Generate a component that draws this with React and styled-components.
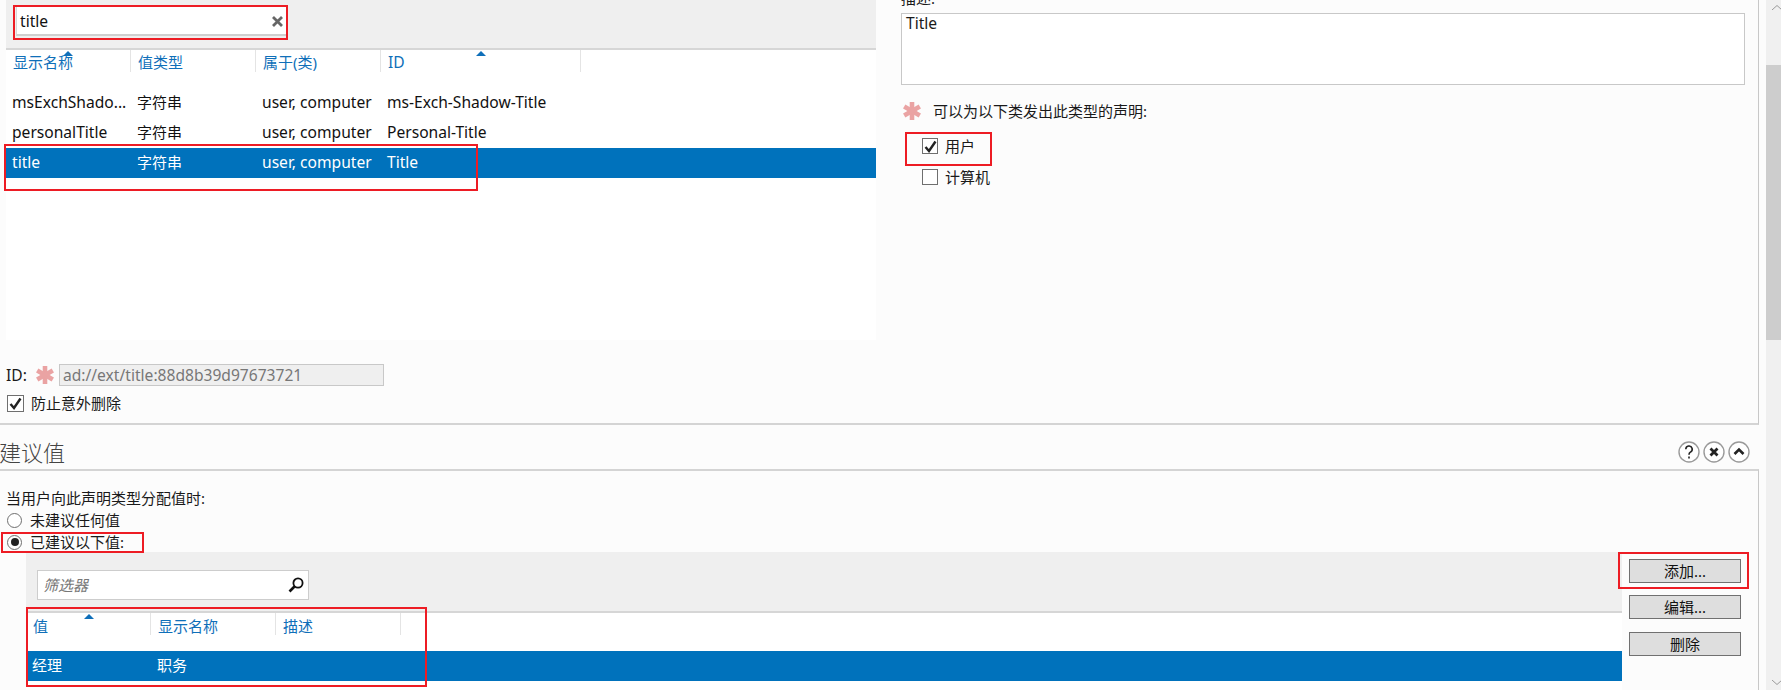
import React from "react";
import styled, { createGlobalStyle } from "styled-components";

const CJK = `"Noto Sans", "Noto Sans CJK SC", sans-serif`;
const LATIN_SIZE = "15.6px";

const Global = createGlobalStyle`
  html, body { margin: 0; padding: 0; background: #fcfcfc; }
  body { font: 15px/20px ${CJK}; color: #1a1a1a; overflow: hidden; }
  * { box-sizing: border-box; }
`;

const Page = styled.div`
  position: relative;
  width: 1781px;
  height: 690px;
  display: flex;
  overflow: hidden;
`;
const Main = styled.div`
  width: 1766px;
  display: flex;
  flex-direction: column;
`;
const TopPanel = styled.section`
  flex: none;
  height: 425px;
  width: 1759px;
  border-right: 1px solid #c8c8c8;
  border-bottom: 2px solid #d4d4d4;
  display: flex;
`;
const LeftColumn = styled.div`
  width: 901px;
  padding-left: 6px;
`;
const ListPanel = styled.div`
  width: 870px;
  height: 340px;
  background: #fff;
`;
const FilterBar = styled.div`
  height: 48px;
  padding: 7px 0 0 10px;
  background: #efefef;
`;
const TopSearch = styled.div`
  width: 271px;
  height: 29px;
  background: #fff;
  border-bottom: 2px solid #cfcfcf;
  border-left: 1px solid #d8d8d8;
  font-size: ${LATIN_SIZE};
  line-height: 28px;
  padding-left: 3px;
  color: #111;
  display: flex;
  justify-content: space-between;
`;
const ClearGlyph = styled.svg`
  width: 13px;
  height: 13px;
  margin: 8px 3px 0 0;
`;
const HeaderRow = styled.div`
  display: flex;
  height: ${(p) => p.$h}px;
  border-top: 2px solid #d6d6d6;
  background: #fff;
`;
const HeaderCell = styled.div`
  position: relative;
  width: 125px;
  height: 22px;
  border-right: 1px solid #e4e4e4;
  color: #0f6fb9;
  line-height: 20px;
  padding: ${(p) => p.$top}px 0 0 7px;
`;
const WideHeader = styled(HeaderCell)`
  width: 200px;
  font-size: ${LATIN_SIZE};
`;
const SortArrow = styled.span`
  position: absolute;
  left: ${(p) => p.$x}px;
  top: 1px;
  width: 0;
  height: 0;
  border: 5px solid transparent;
  border-top: 0;
  border-bottom: 5px solid #0f6fb9;
`;
const Row = styled.div`
  display: flex;
  height: 30px;
  line-height: 28px;
  color: ${(p) => (p.$selected ? "#fff" : "#111")};
  background: ${(p) => (p.$selected ? "#0072bc" : "transparent")};
`;
const Cell = styled.div`
  width: 125px;
  padding-left: 6px;
  white-space: nowrap;
  font-size: ${(p) => (p.$latin ? LATIN_SIZE : "15px")};
`;
const IdLine = styled.div`
  display: flex;
  align-items: center;
  height: 22px;
  margin-top: 24px;
  font-size: ${LATIN_SIZE};
`;
const IdLabel = styled.span`
  width: 30px;
`;
const ReadOnly = styled.div`
  width: 325px;
  height: 22px;
  margin-left: 5px;
  background: #efefef;
  border: 1px solid #c8c8c8;
  color: #777;
  line-height: 20px;
  padding-left: 3px;
`;
const Check = styled.div`
  display: flex;
  align-items: center;
  gap: 7px;
  height: 24px;
`;
const Box = styled.span`
  width: 17px;
  height: 17px;
  border: 1px solid #6f6f6f;
  background: #fff;
  display: flex;
  align-items: center;
  justify-content: center;
`;
const SmallBox = styled(Box)`
  width: 16px;
  height: 16px;
`;
const ProtectCheck = styled(Check)`
  margin: 5px 0 0 1px;
`;
const RightColumn = styled.div`
  flex: 1;
`;
const Clipped = styled.div`
  height: 13px;
  line-height: 10px;
  overflow: hidden;
  & > span { position: relative; top: -7px; }
`;
const TextArea = styled.div`
  width: 844px;
  height: 72px;
  background: #fff;
  border: 1px solid #c8c8c8;
  font-size: ${LATIN_SIZE};
  line-height: 19px;
  padding: 0 4px;
`;
const ClaimLine = styled.div`
  display: flex;
  align-items: center;
  gap: 12px;
  margin: 17px 0 0 2px;
  height: 18px;
`;
const ClaimChecks = styled.div`
  display: flex;
  flex-direction: column;
  gap: 7px;
  margin: 14px 0 0 21px;
`;
const HeadingBar = styled.div`
  flex: none;
  height: 44px;
  width: 1759px;
  display: flex;
  justify-content: space-between;
  align-items: center;
  padding-right: 9px;
`;
const Heading = styled.h2`
  margin: 10px 0 0 -1px;
  font-size: 22px;
  font-weight: 300;
  line-height: 32px;
  color: #444;
`;
const HeadIcons = styled.div`
  display: flex;
  gap: 3px;
  margin-top: 9px;
`;
const RoundIcon = styled.svg`
  width: 22px;
  height: 22px;
`;
const BottomPanel = styled.section`
  flex: 1;
  min-height: 0;
  overflow: hidden;
  width: 1759px;
  border-top: 2px solid #d4d4d4;
  border-right: 1px solid #c8c8c8;
  padding: 17px 0 0 6px;
`;
const Prompt = styled.div`
  height: 20px;
`;
const RadioLine = styled.div`
  display: flex;
  align-items: center;
  gap: 8px;
  height: 20px;
  margin: 2px 0 0 1px;
`;
const Radio = styled.span`
  width: 15px;
  height: 15px;
  border-radius: 50%;
  border: 1px solid #6f6f6f;
  background: #fff;
  display: flex;
  align-items: center;
  justify-content: center;
  &::after {
    content: "";
    display: ${(p) => (p.$on ? "block" : "none")};
    width: 8px;
    height: 8px;
    border-radius: 50%;
    background: #222;
  }
`;
const ValuesArea = styled.div`
  display: flex;
  margin-left: 20px;
`;
const ValuesList = styled.div`
  width: 1596px;
  background: #efefef;
`;
const FilterBox = styled.div`
  width: 272px;
  height: 30px;
  margin: 18px 0 11px 11px;
  background: #fff;
  border: 1px solid #cdcdcd;
  display: flex;
  align-items: center;
  justify-content: space-between;
  padding: 0 4px 0 5px;
  color: #777;
  font-style: italic;
`;
const HeadSpacer = styled.div`
  height: 14px;
  background: #fff;
`;
const BottomWhite = styled.div`
  height: 12px;
  background: #fff;
`;
const Buttons = styled.div`
  padding: 7px 0 0 7px;
  display: flex;
  flex-direction: column;
`;
const Btn = styled.button`
  width: 112px;
  height: 24px;
  margin-bottom: ${(p) => p.$mb}px;
  background: #dedede;
  border: 1px solid #707070;
  font: inherit;
  line-height: 20px;
  padding: 0;
  color: #111;
`;
const Scrollbar = styled.div`
  width: 15px;
  background: #f0f0f0;
  display: flex;
  flex-direction: column;
  padding-top: 5px;
`;
const Thumb = styled.div`
  width: 100%;
  height: 275px;
  margin-top: 55px;
  background: #cdcdcd;
`;
const Chevron = styled.svg`
  width: 10px;
  height: 5px;
  margin-left: 6px;
  flex: none;
`;
const BottomChevron = styled(Chevron)`
  margin-top: 340px;
`;
const Highlight = styled.div`
  position: absolute;
  left: ${(p) => p.$x}px;
  top: ${(p) => p.$y}px;
  width: ${(p) => p.$w}px;
  height: ${(p) => p.$h}px;
  border: 2px solid #ed1c24;
  pointer-events: none;
`;

const Asterisk = () => (
  <svg width="18" height="18" viewBox="0 0 18 18">
    <g stroke="#eaa3a3" strokeWidth="4.6">
      <path d="M9 0v18" />
      <path d="M1.2 4.5l15.6 9" />
      <path d="M16.8 4.5l-15.6 9" />
    </g>
  </svg>
);
const Tick = () => (
  <svg width="13" height="13" viewBox="0 0 13 13">
    <path d="M1.5 7l3.5 4L11.5 1.5" fill="none" stroke="#222" strokeWidth="2.4" />
  </svg>
);

const rows = [
  ["msExchShado...", "ms-Exch-Shadow-Title"],
  ["personalTitle", "Personal-Title"],
  ["title", "Title"],
];

const headIcons = [
  { d: "M7.8 8.2a3.2 3.2 0 1 1 4.6 2.9c-1 .6-1.4 1.2-1.4 2.6M11 15.4v2", w: 1.6 },
  { d: "M7.5 7.5l7 7M14.5 7.5l-7 7", w: 2.8 },
  { d: "M6.5 13L11 8.5l4.5 4.5", w: 2.6 },
];

export default function App() {
  return (
    <Page>
      <Global />
      <Main>
        <TopPanel>
          <LeftColumn>
            <ListPanel>
              <FilterBar>
                <TopSearch>
                  title
                  <ClearGlyph viewBox="0 0 13 13">
                    <path d="M2 2l9 9M11 2l-9 9" stroke="#666" strokeWidth="2.8" />
                  </ClearGlyph>
                </TopSearch>
              </FilterBar>
              <HeaderRow $h={40}>
                <HeaderCell $top={2}>显示名称<SortArrow $x={57} /></HeaderCell>
                <HeaderCell $top={2}>值类型</HeaderCell>
                <HeaderCell $top={2}>属于(类)</HeaderCell>
                <WideHeader $top={2}>ID<SortArrow $x={95} /></WideHeader>
              </HeaderRow>
              {rows.map(([name, id], i) => (
                <Row key={name} $selected={i === 2}>
                  <Cell $latin>{name}</Cell>
                  <Cell>字符串</Cell>
                  <Cell $latin>user, computer</Cell>
                  <Cell $latin>{id}</Cell>
                </Row>
              ))}
            </ListPanel>
            <IdLine>
              <IdLabel>ID:</IdLabel>
              <Asterisk />
              <ReadOnly>ad://ext/title:88d8b39d97673721</ReadOnly>
            </IdLine>
            <ProtectCheck>
              <Box><Tick /></Box>
              防止意外删除
            </ProtectCheck>
          </LeftColumn>
          <RightColumn>
            <Clipped><span>描述:</span></Clipped>
            <TextArea>Title</TextArea>
            <ClaimLine><Asterisk />可以为以下类发出此类型的声明:</ClaimLine>
            <ClaimChecks>
              <Check><SmallBox><Tick /></SmallBox>用户</Check>
              <Check><SmallBox />计算机</Check>
            </ClaimChecks>
          </RightColumn>
        </TopPanel>
        <HeadingBar>
          <Heading>建议值</Heading>
          <HeadIcons>
            {headIcons.map(({ d, w }) => (
              <RoundIcon key={d} viewBox="0 0 22 22">
                <circle cx="11" cy="11" r="10" fill="#fff" stroke="#9a9a9a" strokeWidth="1.4" />
                <path d={d} fill="none" stroke="#222" strokeWidth={w} />
              </RoundIcon>
            ))}
          </HeadIcons>
        </HeadingBar>
        <BottomPanel>
          <Prompt>当用户向此声明类型分配值时:</Prompt>
          <RadioLine><Radio />未建议任何值</RadioLine>
          <RadioLine><Radio $on />已建议以下值:</RadioLine>
          <ValuesArea>
            <ValuesList>
              <FilterBox>
                筛选器
                <svg width="18" height="18" viewBox="0 0 18 18">
                  <circle cx="12" cy="7" r="4.6" fill="none" stroke="#111" strokeWidth="1.8" />
                  <path d="M8.5 10.5L3.5 15.5" stroke="#111" strokeWidth="2.6" />
                </svg>
              </FilterBox>
              <HeaderRow $h={26}>
                <HeaderCell $top={3}>值<SortArrow $x={58} /></HeaderCell>
                <HeaderCell $top={3}>显示名称</HeaderCell>
                <HeaderCell $top={3}>描述</HeaderCell>
              </HeaderRow>
              <HeadSpacer />
              <Row $selected>
                <Cell>经理</Cell>
                <Cell>职务</Cell>
              </Row>
              <BottomWhite />
            </ValuesList>
            <Buttons>
              <Btn $mb={12}>添加...</Btn>
              <Btn $mb={13}>编辑...</Btn>
              <Btn $mb={0}>删除</Btn>
            </Buttons>
          </ValuesArea>
        </BottomPanel>
      </Main>
      <Scrollbar>
        <Chevron viewBox="0 0 10 5"><path d="M0 5l5-4.5L10 5" fill="none" stroke="#9a9a9a" /></Chevron>
        <Thumb />
        <BottomChevron viewBox="0 0 10 5"><path d="M0 0l5 4.5L10 0" fill="none" stroke="#9a9a9a" /></BottomChevron>
      </Scrollbar>
      <Highlight $x={13} $y={5} $w={275} $h={35} />
      <Highlight $x={4} $y={144} $w={474} $h={47} />
      <Highlight $x={905} $y={132} $w={87} $h={34} />
      <Highlight $x={1} $y={532} $w={143} $h={21} />
      <Highlight $x={26} $y={607} $w={401} $h={80} />
      <Highlight $x={1618} $y={552} $w={131} $h={37} />
    </Page>
  );
}
